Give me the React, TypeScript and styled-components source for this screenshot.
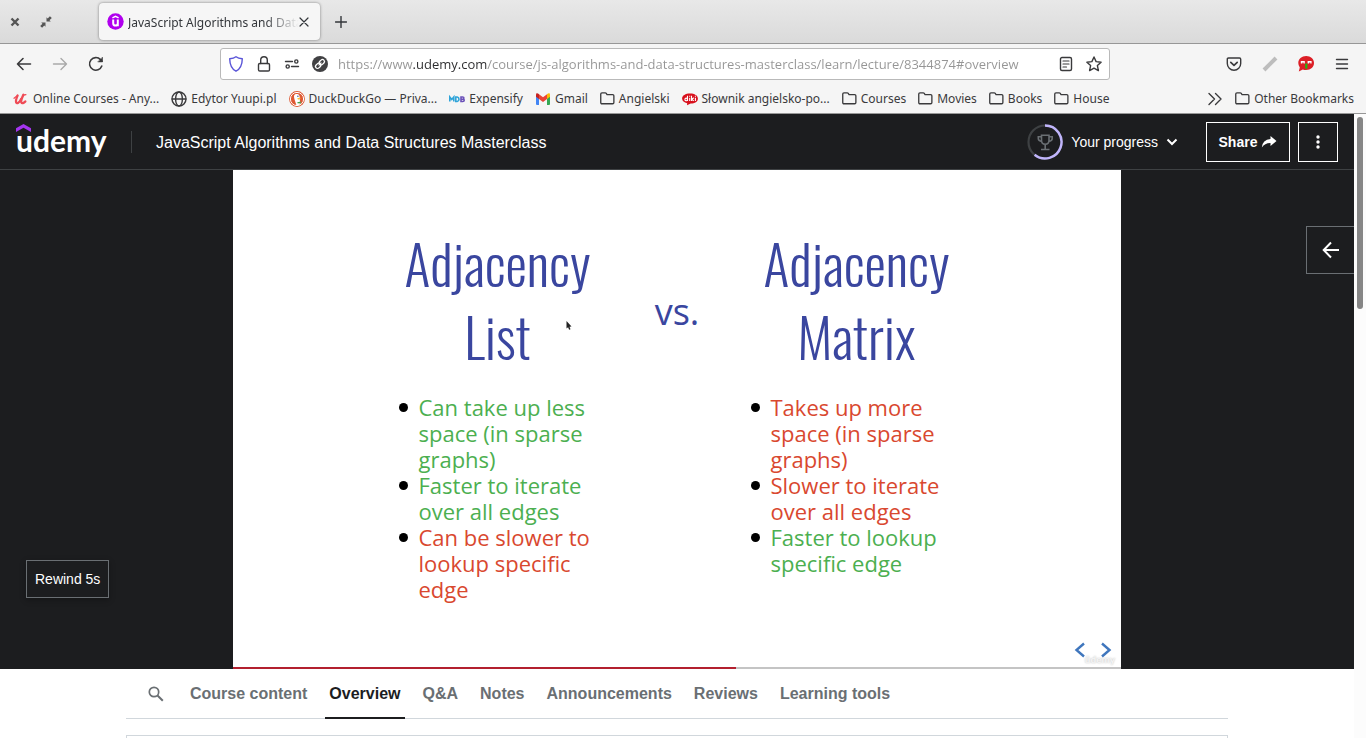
import React from "react";
import styled, { createGlobalStyle } from "styled-components";

const chromeFont = `"Noto Sans", "Open Sans", sans-serif`;
const siteFont = `"Liberation Sans", Arial, sans-serif`;

const GlobalStyle = createGlobalStyle`
  * { box-sizing: border-box; }
  body { margin: 0; background: #fff; overflow: hidden; }
  button, input { font: inherit; color: inherit; margin: 0; padding: 0; border: 0; background: none; }
  a { color: inherit; text-decoration: none; }
  svg { display: block; flex: none; }
`;

const Window = styled.div`
  height: 100vh;
  display: flex;
  flex-direction: column;
  overflow: hidden;
`;

/* ---------- browser chrome ---------- */

const TitleBar = styled.div`
  display: flex;
  align-items: center;
  height: 44px;
  padding-left: 8px;
  background: linear-gradient(#e8e8e8, #dadada);
  border-bottom: 1px solid #979797;
  font: 12px/18px ${chromeFont};
  color: #33363a;
`;

const WindowButton = styled.button`
  width: 30px;
  height: 30px;
  display: flex;
  align-items: center;
  padding-left: 2px;
`;

const BrowserTab = styled.div`
  display: flex;
  align-items: center;
  width: 221px;
  height: 37px;
  margin-left: 31px;
  padding: 0 11px 0 8px;
  border-radius: 4px;
  background: #f6f6f6;
  box-shadow: 0 0 3px rgba(0, 0, 0, 0.45);
`;

const TabTitle = styled.span`
  flex: 1;
  min-width: 0;
  margin: 0 0 0 4px;
  padding-top: 2px;
  white-space: nowrap;
  mask-image: linear-gradient(to right, #000 80%, transparent);
`;

const PlainButton = styled.button`
  display: flex;
  align-items: center;
  justify-content: center;
`;

const NewTab = styled(PlainButton)`
  width: 30px;
  height: 30px;
  margin-left: 6px;
`;

const ToolBar = styled.div`
  display: flex;
  align-items: center;
  height: 40px;
  padding: 0 16px;
  background: #f5f5f5;
  color: #3a3a3c;
`;

const NavButtons = styled.div`
  display: flex;
  gap: 20px;
  width: 204px;
  flex: none;
`;

const AddressBar = styled.div`
  flex: 0 1 890px;
  display: flex;
  align-items: center;
  gap: 12px;
  height: 32px;
  padding: 0 7px;
  background: #fff;
  border: 1px solid #b9b9b9;
  border-radius: 3px;
`;

const AddressInput = styled.input`
  flex: 1;
  min-width: 0;
  margin-left: -2px;
  font: 13px/18px "Open Sans", sans-serif;
  color: transparent;
  background: linear-gradient(to right, #959595 75px, #2c2c2e 75px, #2c2c2e 149px, #959595 149px);
  background-clip: text;
  -webkit-background-clip: text;
`;

const Extensions = styled.div`
  display: flex;
  gap: 20px;
  margin-left: auto;
`;

const BookmarksBar = styled.nav`
  display: flex;
  align-items: center;
  gap: 12px;
  height: 30px;
  padding: 0 12px 0 13px;
  background: #f5f5f5;
  border-bottom: 1px solid #979797;
  font: 12px/18px ${chromeFont};
  color: #3a3a3c;
`;

const Bookmark = styled.a`
  display: flex;
  align-items: center;
  gap: 4px;
  white-space: nowrap;
`;

const MoreBookmarks = styled(PlainButton)`
  margin-left: auto;
`;

/* ---------- course page ---------- */

const Viewport = styled.div`
  flex: 1;
  min-height: 0;
  display: flex;
`;

const Page = styled.main`
  flex: 1;
  min-width: 0;
  display: flex;
  flex-direction: column;
  font-family: ${siteFont};
`;

const ScrollTrack = styled.div`
  width: 12px;
  padding: 3px;
  background: #fcfcfc;
`;

const ScrollThumb = styled.div`
  height: 31%;
  border-radius: 3px;
  background: #868686;
`;

const Header = styled.header`
  flex: none;
  display: flex;
  align-items: center;
  height: 56px;
  padding: 0 16px;
  background: #1c1d1f;
  border-bottom: 1px solid #3e4143;
  color: #fff;
`;

const Logo = styled.a`
  position: relative;
  width: 91px;
  padding-bottom: 4px;
  font: 700 30px/40px Lato, sans-serif;

  svg {
    position: absolute;
    left: 0;
    top: 4px;
  }
`;

const Divider = styled.span`
  width: 1px;
  height: 22px;
  margin: 0 24px;
  background: #3e4143;
`;

const CourseTitle = styled.a`
  padding-top: 2px;
  font-size: 16px;
  line-height: 20px;
`;

const ProgressButton = styled.button`
  display: flex;
  align-items: center;
  gap: 8px;
  margin-left: auto;
  margin-right: 28px;
  font-size: 14px;
  line-height: 20px;
`;

const OutlineButton = styled.button<{ $square?: boolean }>`
  display: flex;
  align-items: center;
  justify-content: center;
  gap: 4px;
  width: ${(p) => (p.$square ? 40 : 84)}px;
  height: 40px;
  margin-left: ${(p) => (p.$square ? 8 : 0)}px;
  border: 1px solid #fff;
  font-weight: 700;
  font-size: 14px;
`;

const Stage = styled.section`
  flex: none;
  display: grid;
  grid-template-columns: 1fr minmax(0, 888px) 1fr;
  min-height: 499px;
  background: #1c1d1f;
  color: #fff;
`;

const RewindButton = styled.button`
  align-self: end;
  justify-self: start;
  height: 38px;
  margin: 0 0 71px 26px;
  padding: 0 8px;
  border: 1px solid #6a6f73;
  font-size: 14px;
  box-shadow: 0 2px 6px rgba(0, 0, 0, 0.3);
`;

const ExpandButton = styled(PlainButton)`
  justify-self: end;
  width: 48px;
  height: 48px;
  margin-top: 56px;
  border: 1px solid #6a6f73;
  border-right: 0;
`;

const Slide = styled.article`
  display: flex;
  flex-direction: column;
  background: #fff;
  font-family: "Open Sans", sans-serif;
`;

const Comparison = styled.div`
  flex: 1;
  display: grid;
  grid-template-columns: 214px 145px 214px;
  justify-content: center;
  padding: 57px 0 0;
`;

const SlideHeading = styled.h2`
  margin: 0;
  font: 350 54px/73px Oswald, "Liberation Sans Narrow", "Roboto Condensed", sans-serif;
  text-align: center;
  color: #3a469f;
`;

const Versus = styled.p`
  margin: 65px 0 0;
  font-size: 36px;
  line-height: 40px;
  text-align: center;
  color: #3a469f;
`;

const Points = styled.ul<{ $indent: number }>`
  margin: 21px 0 0;
  padding-left: ${(p) => p.$indent}px;
  list-style: none;
  font-size: 22px;
  line-height: 26px;
`;

const Point = styled.li<{ $good?: boolean }>`
  position: relative;
  color: ${(p) => (p.$good ? "#4caf50" : "#d9482f")};

  &::before {
    content: "";
    position: absolute;
    left: -20px;
    top: 9px;
    width: 9px;
    height: 9px;
    border-radius: 50%;
    background: #000;
  }
`;

const SlideFooter = styled.div`
  position: relative;
  display: flex;
  justify-content: flex-end;
  gap: 14px;
  padding: 0 9px 9px;
  color: #3f76bd;
`;

const Watermark = styled.span`
  position: absolute;
  right: 6px;
  bottom: 1px;
  font: 700 10px/14px Lato, sans-serif;
  color: #f4f4f4;
  text-shadow: 0 0 2px #bbb;
`;

const Playback = styled.div`
  height: 2px;
  background: #c4c4c4;
`;

const Played = styled.div`
  height: 2px;
  background: #b3202f;
`;

const Pointer = styled.svg`
  position: absolute;
  right: 33px;
  bottom: 43px;
`;

const HeadingWrap = styled.div`
  position: relative;
`;

const Tabs = styled.nav`
  flex: none;
  display: flex;
  align-items: stretch;
  gap: 14px;
  height: 50px;
  margin: 0 126px;
  padding-left: 22px;
  border-bottom: 1px solid #d1d7dc;
`;

const SearchTab = styled(PlainButton)`
  margin-right: 8px;
  color: #6a6f73;
`;

const Tab = styled.a<{ $active?: boolean }>`
  display: flex;
  align-items: center;
  margin-bottom: -1px;
  padding: 2px 4px 0;
  border-bottom: 2px solid ${(p) => (p.$active ? "#1c1d1f" : "transparent")};
  font-weight: 700;
  font-size: 16px;
  color: ${(p) => (p.$active ? "#1c1d1f" : "#6a6f73")};
  white-space: nowrap;
`;

const Panel = styled.section`
  flex: 1;
  margin: 16px 126px 0;
  border: 1px solid #d1d7dc;
  border-bottom: 0;
`;

/* ---------- icons ---------- */

const line = {
  fill: "none",
  stroke: "currentColor",
  strokeWidth: 1.4,
  strokeLinecap: "round" as const,
  strokeLinejoin: "round" as const,
};

const FolderIcon = () => (
  <svg width="15" height="15" viewBox="0 0 16 16" {...line}>
    <path d="M.8 3.3q0-1.3 1.3-1.3h3.4q.8 0 1.2.6l.8 1.2h6q1.3 0 1.3 1.3v7.1q0 1.4-1.3 1.4H2.1q-1.3 0-1.3-1.3z" />
  </svg>
);

const UdemyU = () => (
  <svg width="16" height="16" viewBox="0 0 16 16" fill="none" stroke="#ef4b56" strokeLinecap="round" strokeLinejoin="round">
    <path strokeWidth="2.2" d="M4.600 4.500C3.300 7.500 2.600 9.800 3.100 11.400c.7 1.800 3.300.3 5-3.400" />
    <path strokeWidth="2.400" d="M10.400 3.800C8.700 7.400 7.700 9.900 8.300 11.300c.7 1.500 2.500.9 4-.9" />
    <path strokeWidth="1.300" d="M1 7.200l3.600-2.700M10.400 4.200l2.500-.6" />
  </svg>
);

const GlobeIcon = () => (
  <svg width="16" height="16" viewBox="0 0 16 16" {...line}>
    <circle cx="8" cy="8" r="7" />
    <ellipse cx="8" cy="8" rx="3.4" ry="7" />
    <path d="M1.200 8h13.600" />
  </svg>
);

const DuckIcon = () => (
  <svg width="16" height="16" viewBox="0 0 16 16">
    <circle cx="8" cy="8" r="7.9" fill="#de5833" />
    <circle cx="8" cy="8" r="6.6" fill="#de5833" stroke="#fff" strokeWidth="1" />
    <path fill="#fff" d="M5.2 4.2C6 2.800 9.300 2.500 10.300 4.400c.8 1.500.3 2.800.4 4l.9 4.900q-2.200 1.200-4.200.9C6.700 11 4.300 6.500 5.200 4.200z" />
    <path fill="#fbbf24" d="M8.300 7.300q2.400-1 4-.3-1.500.9-3.200 1.700z" />
    <path fill="#43a047" d="M8.300 11.200l3.500-.8v2.200l-3.300-.3z" />
    <circle cx="8.900" cy="5.300" r=".7" fill="#2d4f8e" />
  </svg>
);

const MdbIcon = () => (
  <svg width="16" height="16" viewBox="0 0 16 16" fill="none" strokeWidth="1.600">
    <path stroke="#2fa4d9" d="M.8 10.500V6l2 2.500 2-2.500v4.500" />
    <path stroke="#2fa4d9" d="M6.800 6v4.500h1.400q1.800-.3 1.800-2.200T8.200 6z" />
    <path stroke="#6a50b8" d="M12 6v4.500h1.800q1.400 0 1.400-1.200t-1.400-1.100H12h1.600q1.300 0 1.300-1.100T13.600 6z" />
  </svg>
);

const GmailIcon = () => (
  <svg width="16" height="16" viewBox="0 0 16 16">
    <path fill="#4285f4" d="M1 4.500l3 2.200V14H2q-1 0-1-1z" />
    <path fill="#34a853" d="M15 4.500l-3 2.200V14h2q1 0 1-1z" />
    <path fill="#fbbc04" d="M12 3.300l1-.8q2-.8 2 1.200v2l-3 2.200z" />
    <path fill="#c5221f" d="M1 3.700q0-2 2-1.200l1 .8v4.600L1 5.700z" />
    <path fill="#ea4335" d="M4 3.300l4 3 4-3v4.600l-4 3-4-3z" />
  </svg>
);

const DikiIcon = () => (
  <svg width="16" height="16" viewBox="0 0 16 16">
    <path fill="#d8101c" d="M8 2.400c4.600 0 7.900 2 7.900 5 0 3.200-3 5.100-7.200 5.100L5 14.300l.2-2.100C2.100 11.500.1 9.800.1 7.400c0-3 3.400-5 7.900-5z" />
    <g stroke="#fff" strokeWidth="1.100" fill="none">
      <circle cx="4.200" cy="8.400" r="1.300" />
      <path d="M5.500 4.700v5.200M7.700 6.700v3.200M9.500 4.700v5.200M11.800 6.700l-2 1.600 2 1.600M13.400 6.700v3.200M7.700 4.700v1M13.400 4.700v1" />
    </g>
  </svg>
);

const FaviconIcon = () => (
  <svg width="17" height="17" viewBox="0 0 17 17" fill="none" stroke="#fff">
    <circle cx="8.500" cy="8.500" r="8.200" fill="#b000ee" stroke="none" />
    <path strokeWidth="1.400" d="M5.400 4.900l3.100-1.600 3.100 1.600" />
    <path strokeWidth="2" d="M6.200 6.600v3.600q0 2.400 2.300 2.400t2.300-2.400V6.600v6.600" />
  </svg>
);

const bookmarks: [string, React.ReactNode][] = [
  ["Online Courses - Any...", <UdemyU />],
  ["Edytor Yuupi.pl", <GlobeIcon />],
  ["DuckDuckGo — Priva...", <DuckIcon />],
  ["Expensify", <MdbIcon />],
  ["Gmail", <GmailIcon />],
  ["Angielski", <FolderIcon />],
  ["Słownik angielsko-po...", <DikiIcon />],
  ["Courses", <FolderIcon />],
  ["Movies", <FolderIcon />],
  ["Books", <FolderIcon />],
  ["House", <FolderIcon />],
];

const tabs = ["Course content", "Overview", "Q&A", "Notes", "Announcements", "Reviews", "Learning tools"];

export default function App() {
  return (
    <Window>
      <GlobalStyle />
      <TitleBar>
        <WindowButton aria-label="Close window">
          <svg width="10" height="10" viewBox="0 0 10 10" stroke="#555" strokeWidth="2.400"><path d="M1.500 1.500l7 7M8.500 1.500l-7 7" /></svg>
        </WindowButton>
        <WindowButton aria-label="Restore window">
          <svg width="12" height="12" viewBox="0 0 12 12" fill="#555">
            <path d="M6.500 1.200v4.300h4.300L9.500 4.300l2.300-2.200L9.900.2 7.700 2.500zM5.500 10.800V6.500H1.200l1.300 1.200L.2 9.900l1.900 1.900 2.200-2.300z" />
          </svg>
        </WindowButton>
        <BrowserTab>
          <FaviconIcon />
          <TabTitle>JavaScript Algorithms and Data</TabTitle>
          <PlainButton aria-label="Close tab">
            <svg width="10" height="10" viewBox="0 0 10 10" {...line} strokeWidth="1.200"><path d="M1 1l8 8M9 1l-8 8" /></svg>
          </PlainButton>
        </BrowserTab>
        <NewTab aria-label="New tab">
          <svg width="12" height="12" viewBox="0 0 12 12" {...line}><path d="M6 .5v11M.5 6h11" /></svg>
        </NewTab>
      </TitleBar>

      <ToolBar>
        <NavButtons>
          <PlainButton aria-label="Back">
            <svg width="16" height="16" viewBox="0 0 16 16" {...line} strokeWidth="1.600"><path d="M14.500 8H1.500M7 2.500L1.500 8 7 13.500" /></svg>
          </PlainButton>
          <PlainButton aria-label="Forward">
            <svg width="16" height="16" viewBox="0 0 16 16" {...line} stroke="#a9a9a9"><path d="M1.500 8h13M9 2.500L14.500 8 9 13.500" /></svg>
          </PlainButton>
          <PlainButton aria-label="Reload">
            <svg width="16" height="16" viewBox="0 0 16 16" {...line} strokeWidth="1.600"><path d="M13.800 10A6.300 6.300 0 1 1 12.500 3.600L14 5.200" /><path d="M14.500 1.500v4.400h-4.400z" fill="currentColor" strokeWidth=".6" /></svg>
          </PlainButton>
        </NavButtons>
        <AddressBar>
          <svg width="16" height="16" viewBox="0 0 16 16" {...line} stroke="#5a55d8"><path d="M8 .8c1.600 1.300 3.800 1.900 6.300 2-.1 6-1.900 10.300-6.300 12.400C3.600 13.100 1.800 8.800 1.700 2.800 4.200 2.700 6.400 2.100 8 .8z" /></svg>
          <svg width="16" height="16" viewBox="0 0 16 16" {...line}><rect x="2.500" y="7.500" width="11" height="7.500" rx="1.300" /><path d="M4.700 7.500V4a3.300 3.300 0 0 1 6.600 0v3.500" /></svg>
          <svg width="16" height="16" viewBox="0 0 16 16" {...line}><path d="M1.500 5.500h7M7.500 10.500h7" /><circle cx="12.300" cy="5.500" r="1.600" /><circle cx="3.700" cy="10.500" r="1.600" /></svg>
          <svg width="16" height="16" viewBox="0 0 16 16">
            <circle cx="8" cy="8" r="8" fill="#414143" />
            <g fill="none" stroke="#fff" strokeWidth="1.300" transform="rotate(-45 8 8)"><rect x="2.500" y="6" width="5.700" height="4" rx="2" /><rect x="7.800" y="6" width="5.700" height="4" rx="2" /><path d="M6 8h4" /></g>
          </svg>
          <AddressInput
            aria-label="Address"
            defaultValue="https://www.udemy.com/course/js-algorithms-and-data-structures-masterclass/learn/lecture/8344874#overview"
          />
          <PlainButton aria-label="Reader view">
            <svg width="16" height="16" viewBox="0 0 16 16" {...line}><rect x="2.500" y="1.500" width="11" height="13" rx="1.500" /><path d="M5 5h6M5 8h6M5 11h3.500" strokeWidth="1.200" /></svg>
          </PlainButton>
          <PlainButton aria-label="Bookmark this page">
            <svg width="16" height="16" viewBox="0 0 16 16" {...line}><path d="M8 1l2.100 4.600 5 .6-3.700 3.400 1 5L8 12.100l-4.400 2.500 1-5L.9 6.200l5-.6z" /></svg>
          </PlainButton>
        </AddressBar>
        <Extensions>
          <PlainButton aria-label="Save to Pocket">
            <svg width="16" height="16" viewBox="0 0 16 16" {...line}><path d="M2.500 2h11q1.200 0 1.200 1.200V7.500a6.700 6.700 0 0 1-13.400 0V3.200Q1.300 2 2.500 2z" /><path d="M4.800 6.300L8 9.300l3.200-3" strokeWidth="1.700" /></svg>
          </PlainButton>
          <PlainButton aria-label="Marker">
            <svg width="16" height="16" viewBox="0 0 16 16"><path d="M2 14L14 2" stroke="#bdbdbd" strokeWidth="4" /></svg>
          </PlainButton>
          <PlainButton aria-label="Ad blocker">
            <svg width="16" height="16" viewBox="0 0 16 16">
              <path fill="#dc1f26" d="M8.200 0C12.700 0 16 3 16 7s-3.300 7-7.800 7q-1.800 0-3.400-.6L.8 15.500l1-4Q.3 9.500.3 7C.3 3 3.700 0 8.200 0z" />
              <path fill="#fff" d="M2.800 5h4v2.600H5.500v-1H4.400v1H2.800zM9.600 5h4v2.600h-1.300v-1h-1.100v1H9.600z" />
              <path fill="#25b512" d="M7.200 7.500h2.200v4.700q-1.100 1-2.200 0z" />
            </svg>
          </PlainButton>
          <PlainButton aria-label="Menu">
            <svg width="16" height="16" viewBox="0 0 16 16" {...line}><path d="M2.500 3.500h11M2.500 8h11M2.500 12.500h11" /></svg>
          </PlainButton>
        </Extensions>
      </ToolBar>

      <BookmarksBar>
        {bookmarks.map(([label, icon]) => (
          <Bookmark href="#" key={label}>{icon}{label}</Bookmark>
        ))}
        <MoreBookmarks aria-label="More bookmarks">
          <svg width="16" height="16" viewBox="0 0 16 16" {...line}><path d="M2 2.500L7.500 8 2 13.500M8.500 2.500L14 8l-5.500 5.500" /></svg>
        </MoreBookmarks>
        <Bookmark href="#"><FolderIcon />Other Bookmarks</Bookmark>
      </BookmarksBar>

      <Viewport>
        <Page>
          <Header>
            <Logo href="#">
              <svg width="15" height="8" viewBox="0 0 15 8" fill="#a435f0"><path d="M0 4.300L7.500 0 15 4.300v3.700L7.500 3.700 0 8z" /></svg>
              udemy
            </Logo>
            <Divider />
            <CourseTitle href="#">JavaScript Algorithms and Data Structures Masterclass</CourseTitle>
            <ProgressButton>
              <svg width="36" height="36" viewBox="0 0 36 36" fill="none">
                <circle cx="18" cy="18" r="16.500" stroke="#3e4143" strokeWidth="2.200" />
                <path d="M18 1.500A16.500 16.500 0 1 1 7.600 30.800" stroke="#c0b5fb" strokeWidth="2.400" />
                <path stroke="#6a6f73" strokeWidth="1.600" d="M14.500 11.200h7.500v5.300q0 3.500-3.800 3.800-3.700-.3-3.700-3.800zM14.500 12.800h-3.200v1.700q0 2.500 3.600 3M22 12.800h3.200v1.700q0 2.500-3.600 3M18.200 20.500v4.500M14 25.500h8.500" />
              </svg>
              Your progress
              <svg width="12" height="8" viewBox="0 0 12 8" fill="none" stroke="#fff" strokeWidth="2"><path d="M1.500 1.500L6 6l4.500-4.500" /></svg>
            </ProgressButton>
            <OutlineButton>
              Share
              <svg width="16" height="14" viewBox="0 0 16 14" fill="#fff"><path d="M9.500 1L15.500 6l-6 5V8Q4 7.800 .8 12.500 1.500 4.700 9.500 4z" /></svg>
            </OutlineButton>
            <OutlineButton $square aria-label="Course options">
              <svg width="4" height="14" viewBox="0 0 4 14" fill="#fff"><circle cx="2" cy="2" r="1.700" /><circle cx="2" cy="7" r="1.700" /><circle cx="2" cy="12" r="1.700" /></svg>
            </OutlineButton>
          </Header>

          <Stage>
            <RewindButton>Rewind 5s</RewindButton>
            <Slide>
              <Comparison>
                <div>
                  <HeadingWrap>
                    <SlideHeading>Adjacency List</SlideHeading>
                    <Pointer width="6" height="9" viewBox="0 0 6 9"><path d="M.5 0l5 5.500-2 .2 1 2.500-1.400.5-1-2.500L.5 7.500z" fill="#222" /></Pointer>
                  </HeadingWrap>
                  <Points $indent={28}>
                    <Point $good>Can take up less space (in sparse graphs)</Point>
                    <Point $good>Faster to iterate over all edges</Point>
                    <Point>Can be slower to lookup specific edge</Point>
                  </Points>
                </div>
                <Versus>vs.</Versus>
                <div>
                  <SlideHeading>Adjacency Matrix</SlideHeading>
                  <Points $indent={21}>
                    <Point>Takes up more space (in sparse graphs)</Point>
                    <Point>Slower to iterate over all edges</Point>
                    <Point $good>Faster to lookup specific edge</Point>
                  </Points>
                </div>
              </Comparison>
              <SlideFooter>
                <Watermark>ûdemy</Watermark>
                <PlainButton aria-label="Previous slide">
                  <svg width="12" height="16" viewBox="0 0 12 16" fill="none" stroke="currentColor" strokeWidth="2.400"><path d="M10 1.500L2.500 8l7.500 6.500" /></svg>
                </PlainButton>
                <PlainButton aria-label="Next slide">
                  <svg width="12" height="16" viewBox="0 0 12 16" fill="none" stroke="currentColor" strokeWidth="2.400"><path d="M2 1.500L9.500 8 2 14.500" /></svg>
                </PlainButton>
              </SlideFooter>
              <Playback><Played style={{ width: "56.6%" }} /></Playback>
            </Slide>
            <ExpandButton aria-label="Show course content">
              <svg width="18" height="18" viewBox="0 0 18 18" fill="none" stroke="#fff" strokeWidth="2"><path d="M17 9H2.500M9 1.500L1.700 9 9 16.500" /></svg>
            </ExpandButton>
          </Stage>

          <Tabs>
            <SearchTab aria-label="Search">
              <svg width="16" height="16" viewBox="0 0 16 16" fill="none" stroke="currentColor" strokeWidth="1.700"><circle cx="6" cy="6" r="4.700" /><path d="M9.500 9.500l5.300 5.300" strokeWidth="2" /></svg>
            </SearchTab>
            {tabs.map((t) => (
              <Tab href="#" key={t} $active={t === "Overview"}>{t}</Tab>
            ))}
          </Tabs>
          <Panel />
        </Page>
        <ScrollTrack><ScrollThumb /></ScrollTrack>
      </Viewport>
    </Window>
  );
}
